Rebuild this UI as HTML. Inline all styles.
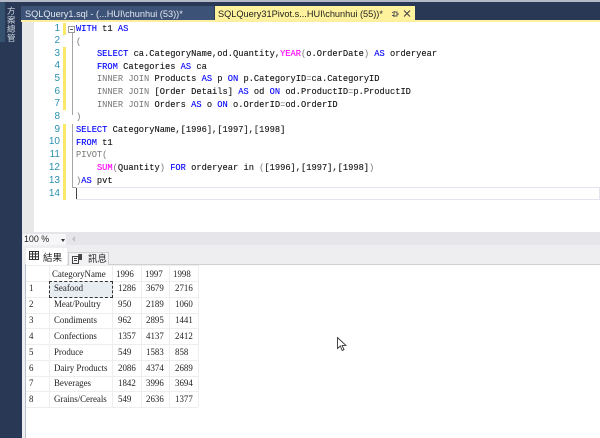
<!DOCTYPE html>
<html><head><meta charset="utf-8">
<style>
html,body{margin:0;padding:0;width:600px;height:438px;overflow:hidden;background:#293955}
*{box-sizing:border-box}
.a{position:absolute}
.ln{position:absolute;white-space:pre;font:8.72px/14px "Liberation Mono",monospace;color:#111;left:76px;-webkit-text-stroke:.1px #111}
.n{position:absolute;left:42px;width:18px;text-align:right;font:10px/12px "Liberation Sans",sans-serif;color:#2b91af}
.k{color:#0000ff;-webkit-text-stroke:.1px #00f}.g{color:#777;-webkit-text-stroke:0}.m{color:#ff00ff;-webkit-text-stroke:.1px #f0f}
.c{position:absolute;font:8.9px/12px "Liberation Serif",serif;color:#222;white-space:pre}
.h{position:absolute;background:#eeeeee;height:1px;left:26px}
.v{position:absolute;background:#eeeeee;width:1px;top:265px}
</style></head><body>
<div style="position:relative;width:600px;height:438px;overflow:hidden">
<div class="a" style="left:0;top:0;width:600px;height:2px;background:#b4bac8"></div>
<div class="a" style="left:0;top:2px;width:5px;height:40px;background:#36506f"></div>
<div class="a" style="left:7px;top:7px;width:10px;font:8.5px/9px 'Noto Sans CJK TC',sans-serif;color:#cfd6e2">方<br>案<br>總<br>管</div>

<div class="a" style="left:21px;top:6px;width:193px;height:14px;background:#3d5277"></div>
<div class="a" style="left:25px;top:7px;font:9.2px/14px 'Liberation Sans',sans-serif;color:#e4e9f2;white-space:pre">SQLQuery1.sql - (...HUI\chunhui (53))*</div>
<div class="a" style="left:215px;top:6px;width:200px;height:15px;background:#fff29d"></div>
<div class="a" style="left:218px;top:7px;font:9.2px/14px 'Liberation Sans',sans-serif;color:#222;white-space:pre">SQLQuery31Pivot.s...HUI\chunhui (55))*</div>
<svg class="a" style="left:390px;top:9px" width="22" height="10"><path d="M4 2v6M2 3.500h1M4 3h3v4H4M2 6.500h2M7 5h2" stroke="#555" fill="none"/><path d="M14 1.500l6 6M20 1.500l-6 6" stroke="#444" stroke-width="1.100" fill="none"/></svg>

<div class="a" style="left:21px;top:20px;width:579px;height:2px;background:#fdeea0"></div>
<div class="a" style="left:22px;top:22px;width:578px;height:211px;background:#fff"></div>
<div class="a" style="left:22px;top:22px;width:12px;height:211px;background:#e8e8e9"></div>
<div class="a" style="left:63px;top:23px;width:3px;height:12px;background:#fce868"></div>
<div class="a" style="left:63px;top:47px;width:3px;height:63px;background:#fce868"></div>
<div class="a" style="left:63px;top:124px;width:3px;height:76px;background:#fce868"></div>
<div class="a" style="left:72px;top:33px;width:1px;height:82px;background:#a5a5a5"></div>
<div class="a" style="left:72px;top:124px;width:1px;height:63px;background:#a5a5a5"></div>
<div class="a" style="left:72px;top:187px;width:4px;height:1px;background:#a5a5a5"></div>
<div class="a" style="left:68px;top:26px;width:7px;height:7px;border:1px solid #999;background:#fff"></div>
<div class="a" style="left:70px;top:29px;width:3px;height:1px;background:#555"></div>
<div class="a" style="left:76px;top:187px;width:524px;height:13px;border:1px solid #e4e4ee;border-left:0;background:#fff"></div>
<div class="a" style="left:76px;top:188px;width:1px;height:11px;background:#444"></div>

<div class="n" style="top:23px">1</div><div class="n" style="top:35px">2</div><div class="n" style="top:48px">3</div><div class="n" style="top:60px">4</div><div class="n" style="top:73px">5</div><div class="n" style="top:86px">6</div><div class="n" style="top:98px">7</div><div class="n" style="top:111px">8</div><div class="n" style="top:124px">9</div><div class="n" style="top:136px">10</div><div class="n" style="top:149px">11</div><div class="n" style="top:162px">12</div><div class="n" style="top:175px">13</div><div class="n" style="top:188px">14</div>

<div class="ln" style="top:22px"><span class="k">WITH</span> t1 <span class="k">AS</span></div>
<div class="ln g" style="top:35px">(</div>
<div class="ln" style="top:47px">    <span class="k">SELECT</span> ca.CategoryName,od.Quantity,<span class="m">YEAR</span><span class="g">(</span>o.OrderDate<span class="g">)</span> <span class="k">AS</span> orderyear</div>
<div class="ln" style="top:60px">    <span class="k">FROM</span> Categories <span class="k">AS</span> ca</div>
<div class="ln" style="top:72px">    <span class="g">INNER JOIN</span> Products <span class="k">AS</span> p <span class="k">ON</span> p.CategoryID<span class="g">=</span>ca.CategoryID</div>
<div class="ln" style="top:85px">    <span class="g">INNER JOIN</span> [Order Details] <span class="k">AS</span> od <span class="k">ON</span> od.ProductID<span class="g">=</span>p.ProductID</div>
<div class="ln" style="top:98px">    <span class="g">INNER JOIN</span> Orders <span class="k">AS</span> o <span class="k">ON</span> o.OrderID<span class="g">=</span>od.OrderID</div>
<div class="ln g" style="top:110px">)</div>
<div class="ln" style="top:123px"><span class="k">SELECT</span> CategoryName,[1996],[1997],[1998]</div>
<div class="ln" style="top:136px"><span class="k">FROM</span> t1</div>
<div class="ln g" style="top:148px">PIVOT(</div>
<div class="ln" style="top:161px">    <span class="m">SUM</span><span class="g">(</span>Quantity<span class="g">)</span> <span class="k">FOR</span> orderyear in <span class="g">(</span>[1996],[1997],[1998]<span class="g">)</span></div>
<div class="ln" style="top:174px"><span class="g">)</span><span class="k">AS</span> pvt</div>

<div class="a" style="left:22px;top:232px;width:578px;height:13px;background:#e6e6ea"></div>
<div class="a" style="left:23px;top:234px;width:43px;height:11px;background:#f6f6f8"></div>
<div class="a" style="left:24px;top:234px;font:8.9px/11px 'Liberation Sans',sans-serif;color:#222">100 %</div>
<div class="a" style="left:61px;top:239px;border:2.500px solid transparent;border-top:3px solid #333;border-bottom:0"></div>
<div class="a" style="left:72px;top:236px;border:3px solid transparent;border-right:3px solid #c4c4c8;border-left:0"></div>

<div class="a" style="left:22px;top:245px;width:578px;height:19px;background:#eeeef0"></div>
<div class="a" style="left:22px;top:264px;width:578px;height:174px;background:#fff"></div>
<div class="a" style="left:22px;top:264px;width:578px;height:1px;background:#cfcfd2"></div>
<div class="a" style="left:22px;top:245px;width:3px;height:193px;background:#eeeef0"></div>
<div class="a" style="left:25px;top:264px;width:1px;height:174px;background:#b8c0d0"></div>
<div class="a" style="left:26px;top:248px;width:41px;height:17px;background:#fff"></div>
<div class="a" style="left:68px;top:252px;width:41px;height:13px;background:#f2f2f4;border:1px solid #d0d0d4;border-bottom:0"></div>
<svg class="a" style="left:29px;top:251px" width="11" height="10"><path d="M.5.500h9v8h-9zM.5 3h9M.5 5.700h9M3.500.500v8M6.500.500v8" fill="none" stroke="#333"/></svg>
<div class="a" style="left:43px;top:251px;font:9.5px/12px 'Noto Sans CJK TC',sans-serif;color:#222;white-space:pre">結果</div>
<svg class="a" style="left:72px;top:254px" width="11" height="10"><path d="M.5 2.500h6v7h-6zM2 4.500h3M2 6.500h3" fill="none" stroke="#444"/><path d="M6 0h4v6H7z" fill="#444"/></svg>
<div class="a" style="left:88px;top:252px;font:9.5px/12px 'Noto Sans CJK TC',sans-serif;color:#222;white-space:pre">訊息</div>

<div class="h" style="top:265px;width:173px"></div>
<div class="h" style="top:281px;width:172px"></div><div class="h" style="top:297px;width:172px"></div><div class="h" style="top:313px;width:172px"></div><div class="h" style="top:328px;width:172px"></div><div class="h" style="top:344px;width:172px"></div><div class="h" style="top:360px;width:172px"></div><div class="h" style="top:376px;width:172px"></div><div class="h" style="top:391px;width:172px"></div><div class="h" style="top:407px;width:172px"></div>
<div class="v" style="left:49px;height:142px"></div><div class="v" style="left:112px;height:142px"></div><div class="v" style="left:141px;height:142px"></div><div class="v" style="left:169px;height:142px"></div><div class="v" style="left:198px;height:142px"></div>
<div class="a" style="left:49px;top:281px;width:64px;height:17px;background:#e8edf2;border:1px dashed #333"></div>

<div class="c" style="left:52px;top:268px">CategoryName</div><div class="c" style="left:116px;top:268px">1996</div><div class="c" style="left:145px;top:268px">1997</div><div class="c" style="left:173px;top:268px">1998</div>

<div class="c" style="left:29px;top:282px">1</div><div class="c" style="left:54px;top:282px">Seafood</div><div class="c" style="left:118px;top:282px">1286</div><div class="c" style="left:146px;top:282px">3679</div><div class="c" style="left:175px;top:282px">2716</div>
<div class="c" style="left:29px;top:298px">2</div><div class="c" style="left:54px;top:298px">Meat/Poultry</div><div class="c" style="left:118px;top:298px">950</div><div class="c" style="left:146px;top:298px">2189</div><div class="c" style="left:175px;top:298px">1060</div>
<div class="c" style="left:29px;top:314px">3</div><div class="c" style="left:54px;top:314px">Condiments</div><div class="c" style="left:118px;top:314px">962</div><div class="c" style="left:146px;top:314px">2895</div><div class="c" style="left:175px;top:314px">1441</div>
<div class="c" style="left:29px;top:330px">4</div><div class="c" style="left:54px;top:330px">Confections</div><div class="c" style="left:118px;top:330px">1357</div><div class="c" style="left:146px;top:330px">4137</div><div class="c" style="left:175px;top:330px">2412</div>
<div class="c" style="left:29px;top:346px">5</div><div class="c" style="left:54px;top:346px">Produce</div><div class="c" style="left:118px;top:346px">549</div><div class="c" style="left:146px;top:346px">1583</div><div class="c" style="left:175px;top:346px">858</div>
<div class="c" style="left:29px;top:362px">6</div><div class="c" style="left:54px;top:362px">Dairy Products</div><div class="c" style="left:118px;top:362px">2086</div><div class="c" style="left:146px;top:362px">4374</div><div class="c" style="left:175px;top:362px">2689</div>
<div class="c" style="left:29px;top:377px">7</div><div class="c" style="left:54px;top:377px">Beverages</div><div class="c" style="left:118px;top:377px">1842</div><div class="c" style="left:146px;top:377px">3996</div><div class="c" style="left:175px;top:377px">3694</div>
<div class="c" style="left:29px;top:393px">8</div><div class="c" style="left:54px;top:393px">Grains/Cereals</div><div class="c" style="left:118px;top:393px">549</div><div class="c" style="left:146px;top:393px">2636</div><div class="c" style="left:175px;top:393px">1377</div>

<svg class="a" style="left:337px;top:337px" width="12" height="15"><path d="M.5.500v11l2.800-2.500 1.900 4.500 1.800-.8-1.900-4.300h3.800z" fill="#fff" stroke="#333" stroke-width=".9"/></svg>
</div>
</body></html>
